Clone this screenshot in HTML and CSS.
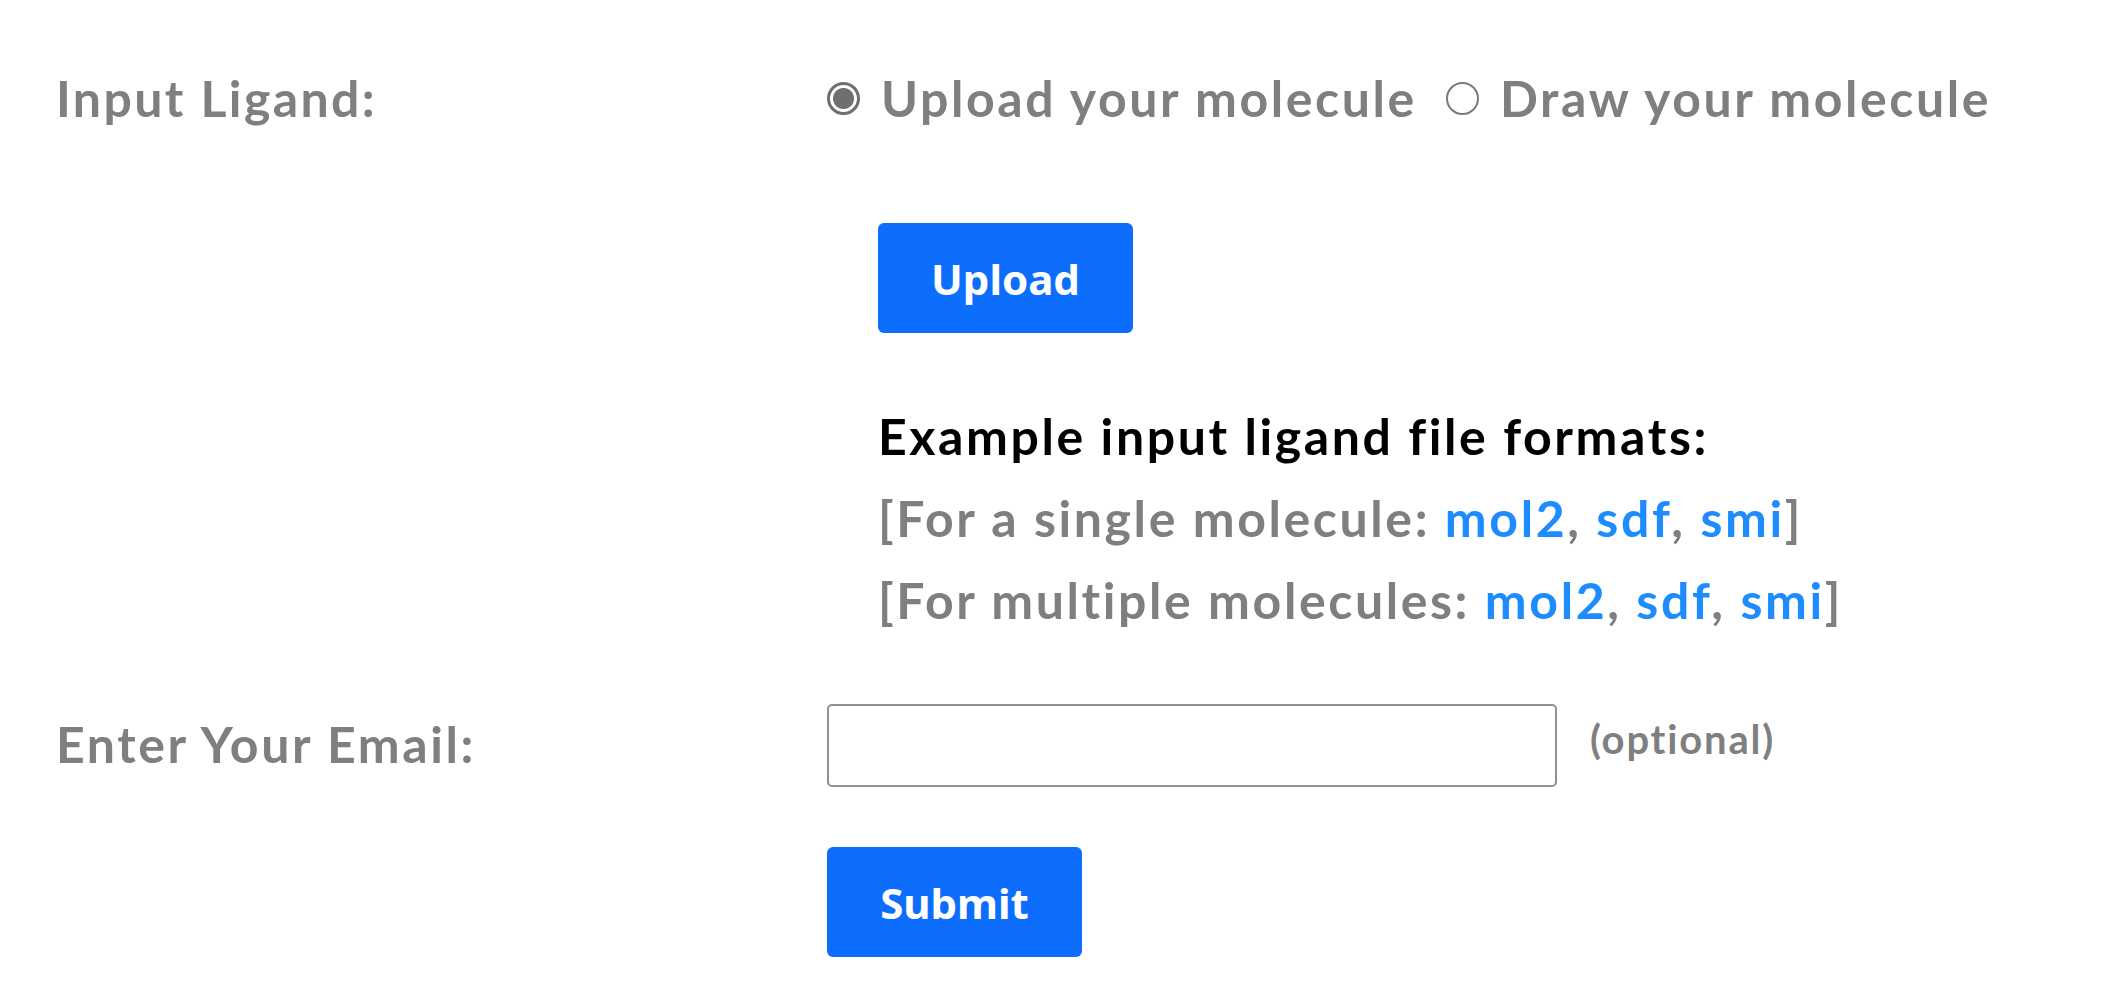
FILE: index.html
```html
<!DOCTYPE html>
<html lang="en">
<head>
<meta charset="utf-8">
<title>Ligand input</title>
<link rel="stylesheet" href="styles.css">
</head>
<body>
<form class="form">
  <div class="row row-ligand">
    <div class="label">Input Ligand:</div>
    <div class="field">
      <div class="choices">
        <label class="choice"><input type="radio" name="mode" class="radio" checked><span>Upload your molecule</span></label>
        <label class="choice"><input type="radio" name="mode" class="radio"><span>Draw your molecule</span></label>
      </div>
      <div class="upload-block">
        <button type="button" class="btn btn-upload">Upload</button>
        <div class="examples">
          <div class="ex-title">Example input ligand file formats:</div>
          <div class="ex-line">[For a single molecule: <a href="#">mol2</a>, <a href="#">sdf</a>, <a href="#">smi</a>]</div>
          <div class="ex-line">[For multiple molecules: <a href="#">mol2</a>, <a href="#">sdf</a>, <a href="#">smi</a>]</div>
        </div>
      </div>
    </div>
  </div>
  <div class="row row-email">
    <div class="label">Enter Your Email:</div>
    <div class="field">
      <div class="email-line">
        <input type="email" class="email">
        <span class="optional">(optional)</span>
      </div>
      <button type="submit" class="btn btn-submit">Submit</button>
    </div>
  </div>
</form>
</body>
</html>
```
FILE: styles.css
```css
html, body {
  margin: 0;
  padding: 0;
  background: #ffffff;
}

body {
  font-family: Lato, "Open Sans", sans-serif;
  font-weight: 700;
  color: #7f7f7f;
}

.form {
  padding: 68px 0 0 56px;
}

.row {
  display: grid;
  grid-template-columns: 771px 1fr;
}

.label {
  font-size: 50px;
  line-height: 60px;
  letter-spacing: 2.4px;
  color: #7f7f7f;
}

.row-email .label {
  padding-top: 10px;
  letter-spacing: 2.6px;
}

.choices {
  display: flex;
  align-items: center;
  height: 60px;
  gap: 29px;
}

.choice {
  display: flex;
  align-items: center;
  gap: 21px;
  font-size: 50px;
  line-height: 60px;
  letter-spacing: 2.6px;
  color: #7f7f7f;
}

.radio {
  appearance: none;
  -webkit-appearance: none;
  margin: 0;
  width: 33px;
  height: 33px;
  border-radius: 50%;
  border: 2px solid #7a7a7a;
  background: #fff;
  box-sizing: border-box;
}

.radio:checked {
  border: 3px solid #6f6f6f;
  background: radial-gradient(circle, #6f6f6f 0 10px, #fff 11px);
}

.upload-block {
  padding: 95px 0 0 51px;
}

.btn {
  display: block;
  width: 255px;
  height: 110px;
  border: none;
  border-radius: 6px;
  background: #0d6efd;
  color: #ffffff;
  font-family: "Noto Sans", "Open Sans", sans-serif;
  font-weight: 700;
  font-size: 42px;
  padding: 0;
}

.examples {
  padding-top: 62px;
  padding-bottom: 63px;
}

.ex-title {
  font-size: 50px;
  line-height: 82px;
  letter-spacing: 2.6px;
  color: #000000;
}

.ex-line {
  font-size: 50px;
  line-height: 82px;
  letter-spacing: 2.6px;
  color: #7f7f7f;
}

.ex-line a {
  color: #1e8cff;
  text-decoration: none;
}

.email-line {
  display: flex;
  align-items: center;
  gap: 33px;
}

.email {
  width: 730px;
  height: 83px;
  box-sizing: border-box;
  border: 2px solid #8f8f8f;
  border-radius: 5px;
  margin: 0;
  background: #fff;
}

.optional {
  font-size: 40px;
  line-height: 48px;
  letter-spacing: 1.8px;
  padding-bottom: 14px;
  color: #7f7f7f;
}

.btn-submit {
  margin-top: 60px;
}
```
